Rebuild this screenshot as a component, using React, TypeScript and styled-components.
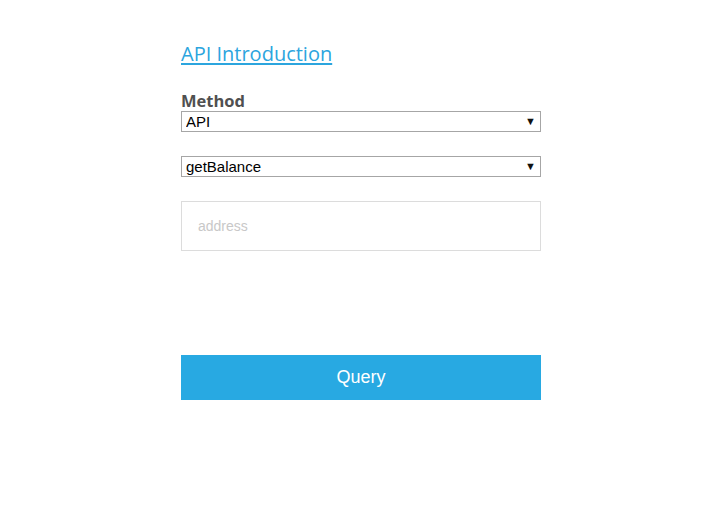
import React from "react";
import styled, { createGlobalStyle } from "styled-components";

const Global = createGlobalStyle`
  html, body { margin: 0; padding: 0; background: #fff; }
  body { font-family: "Liberation Sans", Arial, sans-serif; }
`;

const Page = styled.div`
  padding: 40px 0 0 181px;
`;

const Column = styled.div`
  width: 360px;
  display: flex;
  flex-direction: column;
`;

const TitleLink = styled.a`
  font-family: "Open Sans", "Noto Sans", sans-serif;
  font-size: 20px;
  line-height: 28px;
  color: #2ca5de;
  text-decoration: underline;
  text-underline-offset: 2px;
  align-self: flex-start;
`;

const Label = styled.label`
  margin-top: 23px;
  font-family: "Open Sans", "Noto Sans", sans-serif;
  font-weight: 700;
  font-size: 16.5px;
  line-height: 19px;
  padding-bottom: 1px;
  color: #505050;
`;

const SelectWrap = styled.div<{ $gap: number }>`
  position: relative;
  margin-top: ${(p) => p.$gap}px;
  height: 21px;
`;

const NativeSelect = styled.select`
  appearance: none;
  -webkit-appearance: none;
  box-sizing: border-box;
  width: 100%;
  height: 21px;
  margin: 0;
  padding: 0 0 0 4px;
  border: 1px solid #a6a6a6;
  border-radius: 0;
  background: #fff;
  font-family: "Liberation Sans", Arial, sans-serif;
  font-size: 15px;
  line-height: 19px;
  color: #000;
`;

const Arrow = styled.span`
  position: absolute;
  right: 5px;
  top: 4px;
  font-size: 11px;
  line-height: 12px;
  color: #111;
  pointer-events: none;
`;

const AddressInput = styled.input`
  box-sizing: border-box;
  margin-top: 24px;
  width: 100%;
  height: 50px;
  padding: 0 16px;
  border: 1px solid #dcdcdc;
  outline: none;
  font-family: "Liberation Sans", Arial, sans-serif;
  font-size: 14px;
  color: #333;
  &::placeholder { color: #c8c8c8; }
`;

const QueryButton = styled.button`
  margin-top: 104px;
  width: 100%;
  height: 45px;
  border: none;
  background: #28a9e2;
  color: #fff;
  font-family: "Liberation Sans", Arial, sans-serif;
  font-size: 18px;
  cursor: pointer;
`;

export default function App() {
  return (
    <>
      <Global />
      <Page>
        <Column>
          <TitleLink href="#">API Introduction</TitleLink>
          <Label>Method</Label>
          <SelectWrap $gap={0}>
            <NativeSelect defaultValue="API">
              <option>API</option>
            </NativeSelect>
            <Arrow>▼</Arrow>
          </SelectWrap>
          <SelectWrap $gap={24}>
            <NativeSelect defaultValue="getBalance">
              <option>getBalance</option>
            </NativeSelect>
            <Arrow>▼</Arrow>
          </SelectWrap>
          <AddressInput placeholder="address" />
          <QueryButton>Query</QueryButton>
        </Column>
      </Page>
    </>
  );
}
